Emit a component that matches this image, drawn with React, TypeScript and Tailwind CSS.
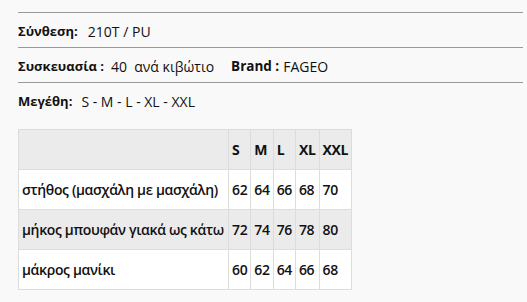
const sizes = ['S', 'M', 'L', 'XL', 'XXL'];

const rows = [
  { label: 'στήθος (μασχάλη με μασχάλη)', values: ['62', '64', '66', '68', '70'], shaded: false },
  { label: 'μήκος μπουφάν γιακά ως κάτω', values: ['72', '74', '76', '78', '80'], shaded: true },
  { label: 'μάκρος μανίκι', values: ['60', '62', '64', '66', '68'], shaded: false },
];

export default function App() {
  return (
    <div className="w-[527px] h-[302px] bg-[#f9f9f9] text-[#111] font-['Open_Sans',sans-serif] pt-[12px] pl-[18px] pr-[4px]">
      {/* στοιχεία προϊόντος */}
      <div className="border-t border-[#999] h-[35px] pt-[3px] flex items-center text-[14px]">
        <span className="font-bold text-[13px]">Σύνθεση:</span>
        <span className="ml-[10px]">210T / PU</span>
      </div>
      <div className="border-t border-[#999] h-[35px] pt-[3px] flex items-center text-[14px]">
        <span className="font-bold text-[13px]">Συσκευασία :</span>
        <span className="ml-[7px]">40&nbsp; ανά κιβώτιο</span>
        <span className="font-bold text-[13.5px] ml-[17px]">Brand :</span>
        <span className="ml-[4px]">FAGEO</span>
      </div>
      <div className="border-t border-[#999] h-[35px] pt-[3px] flex items-center text-[14px]">
        <span className="font-bold text-[13px]">Μεγέθη:</span>
        <span className="ml-[9px]">S - M - L - XL - XXL</span>
      </div>

      {/* πίνακας μεγεθών */}
      <table className="mt-[12px] border-collapse text-[14px] tracking-[-0.35px] whitespace-nowrap">
        <thead>
          <tr className="bg-[#ebebeb] h-[40px]">
            <th className="border border-[#dcdcdc] w-[210px]"></th>
            {sizes.map((s) => (
              <th key={s} className="border border-[#dcdcdc] px-[3px] text-left font-bold">
                {s}
              </th>
            ))}
          </tr>
        </thead>
        <tbody>
          {rows.map((r) => (
            <tr key={r.label} className={`h-[40px] ${r.shaded ? 'bg-[#ebebeb]' : 'bg-white'}`}>
              <td className="border border-[#dcdcdc] px-[3px] font-semibold">{r.label}</td>
              {r.values.map((v, i) => (
                <td key={i} className="border border-[#dcdcdc] px-[3px] font-semibold">
                  {v}
                </td>
              ))}
            </tr>
          ))}
        </tbody>
      </table>
    </div>
  );
}
